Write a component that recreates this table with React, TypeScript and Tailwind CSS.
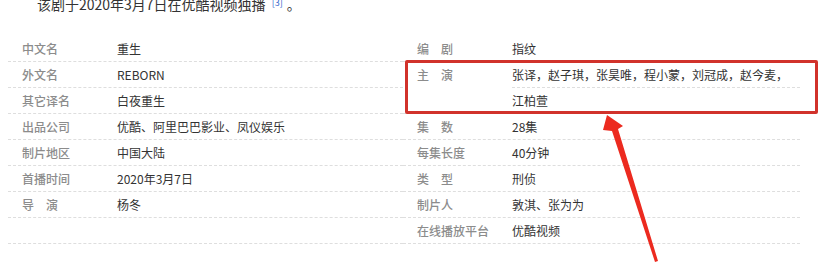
import React from 'react';

type Item = { label: string; value?: string; lines?: string[] };

const leftItems: Item[] = [
  { label: '中文名', value: '重生' },
  { label: '外文名', value: 'REBORN' },
  { label: '其它译名', value: '白夜重生' },
  { label: '出品公司', value: '优酷、阿里巴巴影业、凤仪娱乐' },
  { label: '制片地区', value: '中国大陆' },
  { label: '首播时间', value: '2020年3月7日' },
  { label: '导　演', value: '杨冬' },
  { label: '', value: '' },
];

const rightItems: Item[] = [
  { label: '编　剧', value: '指纹' },
  { label: '主　演', lines: ['张译，赵子琪，张昊唯，程小蒙，刘冠成，赵今麦，', '江柏萱'] },
  { label: '集　数', value: '28集' },
  { label: '每集长度', value: '40分钟' },
  { label: '类　型', value: '刑侦' },
  { label: '制片人', value: '敦淇、张为为' },
  { label: '在线播放平台', value: '优酷视频' },
];

const font = { fontFamily: '"Microsoft YaHei", "Noto Sans CJK SC", "Liberation Sans", sans-serif' };

function InfoRow({ item }: { item: Item }) {
  return (
    <div className="flex border-b border-dashed border-[#dedede] text-[12px] leading-[25px]">
      <div className="w-[95px] shrink-0 pl-[14px] box-content text-[#8c8c8c] font-medium whitespace-pre">{item.label}</div>
      {item.lines ? (
        <div className="flex-1 text-[#333]">
          {item.lines.map((line, i) => (
            <div key={i} className={i < item.lines!.length - 1 ? 'h-[26px] border-b border-dashed border-[#dedede]' : 'h-[25px]'}>
              {line}
            </div>
          ))}
        </div>
      ) : (
        <div className="flex-1 h-[25px] text-[#333]">{item.value}</div>
      )}
    </div>
  );
}

export default function App() {
  return (
    <div className="relative w-[821px] h-[273px] overflow-hidden bg-white" style={font}>
      <p className="-mt-[6px] pl-[37px] text-[14px] leading-[20px] text-[#333]">
        该剧于2020年3月7日在优酷视频独播
        <sup className="ml-[6px] text-[9px] text-[#3366cc]">[3]</sup>
        <span className="ml-[4px]">。</span>
      </p>

      <div className="mt-[22px] ml-[8px] flex w-[792px]">
        <div className="w-[395px]">
          {leftItems.map((it, i) => (
            <InfoRow key={i} item={it} />
          ))}
        </div>
        <div className="w-[397px]">
          {rightItems.map((it, i) => (
            <InfoRow key={i} item={it} />
          ))}
        </div>
      </div>

      {/* highlight around the cast row */}
      <div className="absolute left-[405px] top-[60px] w-[413px] h-[54px] rounded-[2px] border-[3px] border-[#d1322b]" />

      {/* pointer arrow */}
      <svg className="absolute left-0 top-0" width="821" height="273" viewBox="0 0 821 273">
        <polygon
          points="607,115 623,126 618,129 658,261 655,262 612,131 603,130"
          fill="#ec2a1f"
        />
      </svg>
    </div>
  );
}
